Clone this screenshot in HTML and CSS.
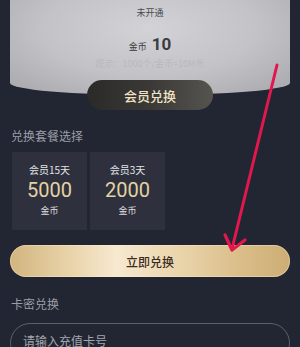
FILE: index.html
```html
<!DOCTYPE html>
<html lang="zh">
<head>
<meta charset="utf-8">
<link rel="stylesheet" href="styles.css">
</head>
<body>
<div class="page">
  <div class="vip-card">
    <div class="status">未开通</div>
    <div class="coins"><span class="coin-label">金币</span><span class="coin-num">10</span></div>
    <div class="hint">提示：1000个/金币=10M币</div>
  </div>
  <div class="pill-row"><div class="pill">会员兑换</div></div>
  <div class="section-title">兑换套餐选择</div>
  <div class="plans">
    <div class="plan">
      <div class="plan-name">会员15天</div>
      <div class="plan-price">5000</div>
      <div class="plan-unit">金币</div>
    </div>
    <div class="plan">
      <div class="plan-name">会员3天</div>
      <div class="plan-price">2000</div>
      <div class="plan-unit">金币</div>
    </div>
  </div>
  <div class="gold-btn">立即兑换</div>
  <div class="section-title card-title">卡密兑换</div>
  <div class="input">请输入充值卡号</div>
  <svg class="arrow" width="300" height="347" viewBox="0 0 300 347">
    <path d="M277 65 L232 249" fill="none" stroke="#e2174e" stroke-width="3" stroke-linecap="round"/>
    <path d="M225 235 L232 250 L245 240" fill="none" stroke="#e2174e" stroke-width="3.2" stroke-linecap="round" stroke-linejoin="round"/>
  </svg>
</div>
</body>
</html>
```
FILE: styles.css
```css
html, body {
  margin: 0;
  padding: 0;
  background: #222632;
}
body {
  width: 300px;
  height: 347px;
  overflow: hidden;
  font-family: "Noto Sans CJK SC", "Noto Sans", sans-serif;
}
.page {
  position: relative;
  width: 300px;
  height: 347px;
  overflow: hidden;
}
.vip-card {
  margin: 0 10px;
  height: 95px;
  box-sizing: border-box;
  padding-top: 4px;
  background: radial-gradient(ellipse 70% 90% at 50% 30%, #d3d3d7 0%, #c3c3c7 55%, #a9a9ae 100%);
  border-radius: 0 0 50% 50% / 0 0 12px 12px;
  display: flex;
  flex-direction: column;
  align-items: center;
}
.status {
  font-size: 9px;
  line-height: 18px;
  color: #4a4a4f;
}
.coins {
  margin-top: 12px;
  display: flex;
  align-items: baseline;
  gap: 5px;
  height: 22px;
  color: #3c3c40;
}
.coin-label {
  font-size: 9px;
}
.coin-num {
  font-family: "Roboto", sans-serif;
  font-size: 17px;
  font-weight: 700;
}
.hint {
  margin-top: 2px;
  font-size: 9px;
  line-height: 12px;
  color: #b8b8bd;
}
.pill-row {
  display: flex;
  justify-content: center;
  margin-top: -15px;
}
.pill {
  width: 126px;
  height: 30px;
  border-radius: 15px;
  background: linear-gradient(90deg, #2a2a29 0%, #3a3936 50%, #55544f 100%);
  color: #f0e3c6;
  font-size: 13px;
  font-weight: 500;
  display: flex;
  align-items: center;
  justify-content: center;
}
.section-title {
  margin: 17px 0 0 11px;
  font-size: 12px;
  line-height: 18px;
  color: #9a9da7;
}
.plans {
  margin: 7px 0 0 12px;
  display: flex;
  gap: 3px;
}
.plan {
  width: 75px;
  height: 78px;
  background: #2e313d;
  display: flex;
  flex-direction: column;
  align-items: center;
  box-sizing: border-box;
  padding-top: 11px;
}
.plan-name {
  font-size: 10px;
  line-height: 14px;
  color: #e4e4e6;
}
.plan-price {
  font-family: "Roboto", sans-serif;
  font-size: 20px;
  line-height: 24px;
  margin-top: 1px;
  color: #e3d3a3;
}
.plan-unit {
  font-size: 9px;
  line-height: 14px;
  margin-top: 2px;
  color: #dcdcdf;
}
.gold-btn {
  margin: 15px 10px 0;
  height: 32px;
  border-radius: 16px;
  background: linear-gradient(90deg, #d2b57f 0%, #e9d4aa 22%, #f7e9d0 38%, #ead5ac 60%, #d8bb85 85%, #ccad75 100%);
  box-shadow: inset 0 0 0 1px rgba(255, 240, 210, 0.35);
  color: #3a2d1f;
  font-size: 12px;
  font-weight: 500;
  display: flex;
  align-items: center;
  justify-content: center;
}
.card-title {
  margin-top: 18px;
}
.input {
  margin: 10px 10px 0;
  height: 40px;
  box-sizing: border-box;
  border: 1px solid #5c606c;
  border-radius: 20px;
  padding: 8px 0 0 12px;
  font-size: 12px;
  line-height: 18px;
  color: #a3a6ae;
}
.arrow {
  position: absolute;
  left: 0;
  top: 0;
  pointer-events: none;
}
```
